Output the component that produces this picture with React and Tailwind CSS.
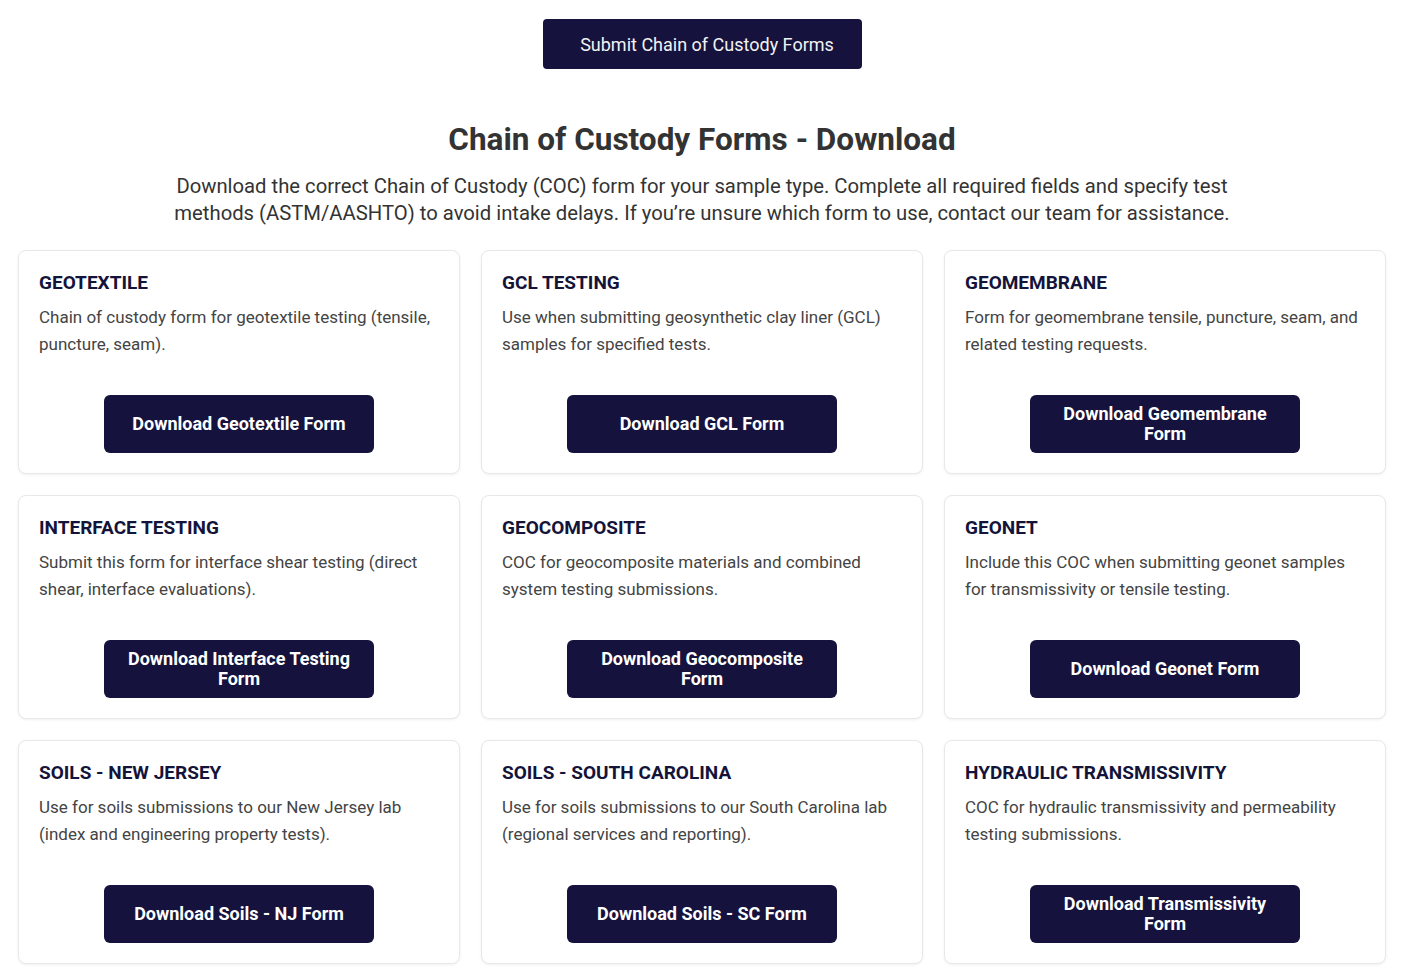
import React from 'react';

const forms = [
  {
    title: 'GEOTEXTILE',
    desc: 'Chain of custody form for geotextile testing (tensile, puncture, seam).',
    label: 'Download Geotextile Form',
  },
  {
    title: 'GCL TESTING',
    desc: 'Use when submitting geosynthetic clay liner (GCL) samples for specified tests.',
    label: 'Download GCL Form',
  },
  {
    title: 'GEOMEMBRANE',
    desc: 'Form for geomembrane tensile, puncture, seam, and related testing requests.',
    label: 'Download Geomembrane Form',
  },
  {
    title: 'INTERFACE TESTING',
    desc: 'Submit this form for interface shear testing (direct shear, interface evaluations).',
    label: 'Download Interface Testing Form',
  },
  {
    title: 'GEOCOMPOSITE',
    desc: 'COC for geocomposite materials and combined system testing submissions.',
    label: 'Download Geocomposite Form',
  },
  {
    title: 'GEONET',
    desc: 'Include this COC when submitting geonet samples for transmissivity or tensile testing.',
    label: 'Download Geonet Form',
  },
  {
    title: 'SOILS - NEW JERSEY',
    desc: 'Use for soils submissions to our New Jersey lab (index and engineering property tests).',
    label: 'Download Soils - NJ Form',
  },
  {
    title: 'SOILS - SOUTH CAROLINA',
    desc: 'Use for soils submissions to our South Carolina lab (regional services and reporting).',
    label: 'Download Soils - SC Form',
  },
  {
    title: 'HYDRAULIC TRANSMISSIVITY',
    desc: 'COC for hydraulic transmissivity and permeability testing submissions.',
    label: 'Download Transmissivity Form',
  },
];

const FormCard = ({ title, desc, label }) => (
  <div className="h-[224px] flex flex-col bg-white border border-[#e8e8e8] rounded-lg shadow-[0_1px_3px_rgba(0,0,0,0.06)] px-[20px] pt-[21px] pb-[20px]">
    <h3 className="text-[19px] leading-[22px] font-bold text-[#14143a]">{title}</h3>
    <p className="mt-[10px] text-[17px] leading-[27px] text-[#444444]">{desc}</p>
    <div className="mt-auto flex justify-center">
      <button className="w-[270px] h-[58px] px-[18px] rounded-md bg-[#15133d] text-white text-[18px] leading-[20px] font-bold text-center">
        {label}
      </button>
    </div>
  </div>
);

export default function App() {
  return (
    <div
      className="min-h-screen bg-white pt-[19px] pb-[16px] pl-[18px] pr-[25px]"
      style={{ fontFamily: 'Roboto, "Noto Sans", sans-serif' }}
    >
      <div className="flex justify-center">
        <button className="w-[319px] h-[50px] pl-[10px] rounded-[4px] bg-[#15133d] text-[#f2f2f2] text-[18px] font-normal">
          Submit Chain of Custody Forms
        </button>
      </div>

      <h1 className="mt-[51px] text-center text-[31.5px] leading-[40px] font-bold text-[#333333]">
        Chain of Custody Forms - Download
      </h1>
      <p className="mt-[13px] mx-auto max-w-[1100px] text-center text-[20.25px] leading-[27px] text-[#333333]">
        Download the correct Chain of Custody (COC) form for your sample type. Complete all required fields and specify test methods (ASTM/AASHTO) to avoid intake delays. If you’re unsure which form to use, contact our team for assistance.
      </p>

      <div className="mt-[23px] grid grid-cols-3 gap-[21px]">
        {forms.map((f) => (
          <FormCard key={f.title} {...f} />
        ))}
      </div>
    </div>
  );
}
